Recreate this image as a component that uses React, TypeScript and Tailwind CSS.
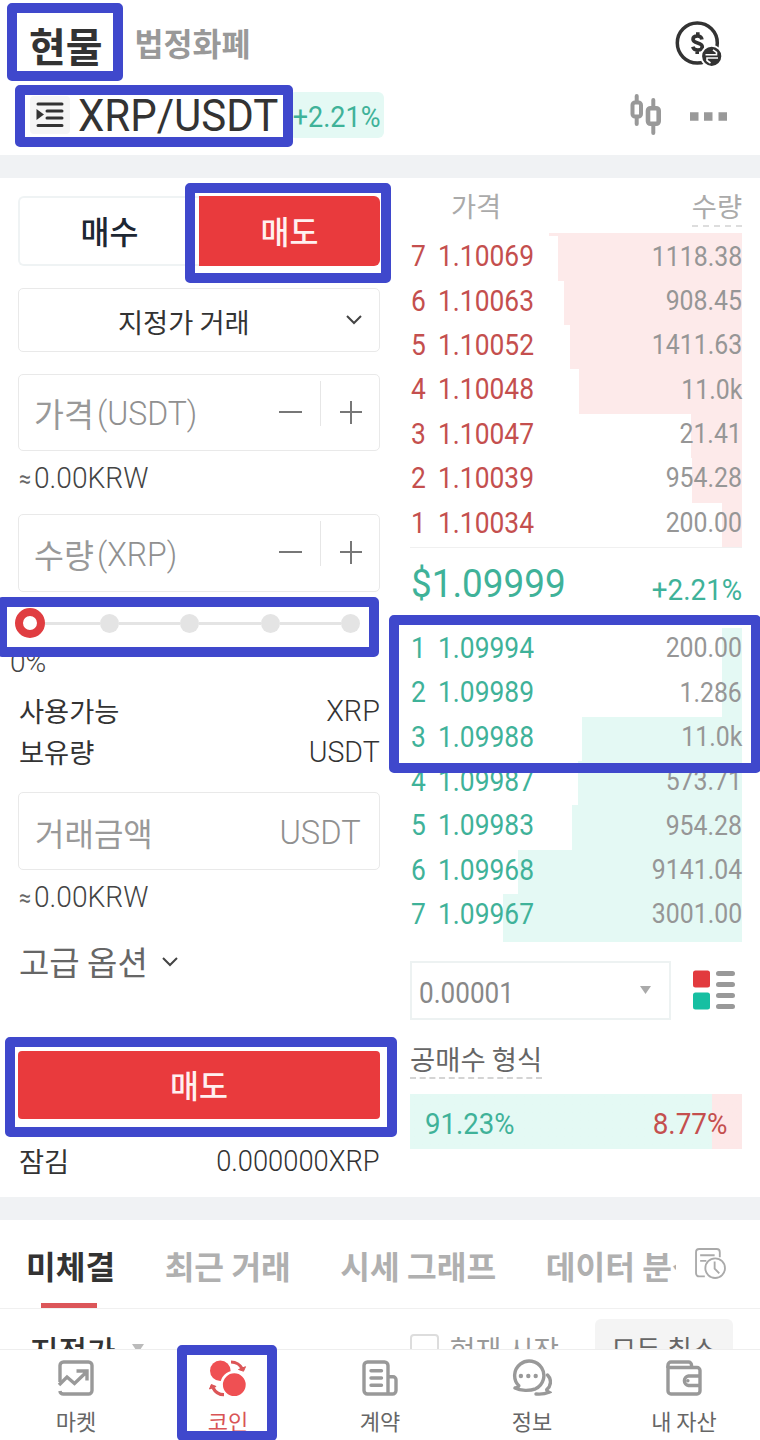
import type { ReactNode } from "react";
import { clsx } from "clsx";

type Level = { n: number; price: string; qty: string; depth: number };

// depth = 深度条宽度（px）
const ASKS: Level[] = [
  { n: 7, price: "1.10069", qty: "1118.38", depth: 184.5 },
  { n: 6, price: "1.10063", qty: "908.45", depth: 178 },
  { n: 5, price: "1.10052", qty: "1411.63", depth: 172 },
  { n: 4, price: "1.10048", qty: "11.0k", depth: 163.5 },
  { n: 3, price: "1.10047", qty: "21.41", depth: 51 },
  { n: 2, price: "1.10039", qty: "954.28", depth: 50 },
  { n: 1, price: "1.10034", qty: "200.00", depth: 20.5 },
];

const BIDS: Level[] = [
  { n: 1, price: "1.09994", qty: "200.00", depth: 20.5 },
  { n: 2, price: "1.09989", qty: "1.286", depth: 20.5 },
  { n: 3, price: "1.09988", qty: "11.0k", depth: 160 },
  { n: 4, price: "1.09987", qty: "573.71", depth: 164 },
  { n: 5, price: "1.09983", qty: "954.28", depth: 170.5 },
  { n: 6, price: "1.09968", qty: "9141.04", depth: 224 },
  { n: 7, price: "1.09967", qty: "3001.00", depth: 239 },
];

/** 拉丁字母 / 数字：横向压窄的 Roboto */
function Num({ className, children }: { className?: string; children: ReactNode }) {
  return (
    <span className={clsx("inline-block whitespace-nowrap font-['Roboto','Noto_Sans_CJK_KR',sans-serif]", className)}>
      {children}
    </span>
  );
}

function BookRow({ level, side }: { level: Level; side: "ask" | "bid" }) {
  const ask = side === "ask";
  return (
    <li className="relative h-[44.38px]">
      <div
        className={clsx("absolute inset-y-0 right-0", ask ? "bg-[#fdeaea]" : "bg-[#e4f9f4]")}
        style={{ width: level.depth }}
      />
      <div className="relative flex h-[39px] items-center">
        <Num className={clsx("w-[28px] origin-left scale-x-[0.88] pl-px text-[30px]", ask ? "text-[#c44f4e]" : "text-[#3fb299]")}>
          {level.n}
        </Num>
        <Num className={clsx("origin-left scale-x-[0.88] text-[30px]", ask ? "text-[#c44f4e]" : "text-[#3fb299]")}>
          {level.price}
        </Num>
        <Num className="ml-auto origin-right scale-x-[0.92] pt-0.5 text-[27px] text-[#969696]">{level.qty}</Num>
      </div>
    </li>
  );
}

function Chevron({ className }: { className?: string }) {
  return (
    <svg viewBox="0 0 16 10" className={clsx("h-[10px] w-4", className)} fill="none" stroke="#444" strokeWidth="2">
      <path d="M1 1l7 7 7-7" />
    </svg>
  );
}

function StepInput({ label, unit, className }: { label: string; unit: string; className?: string }) {
  return (
    <div className={clsx("flex rounded-[5px] border border-[#e9e9e9] pl-[15px]", className)}>
      <div className="flex items-center pt-0.5">
        <span className="text-[32.5px] text-[#999]">{label}</span>
        <Num className="ml-[3px] origin-left scale-x-[0.94] text-[34px] font-light text-[#909090]">({unit})</Num>
      </div>
      <svg viewBox="0 0 88 76" className="ml-auto mr-[14px] h-[76px] w-[88px]" fill="none" stroke="#777" strokeWidth="2">
        <path d="M2 37h23M63 37h22M74 26v23" />
        <path d="M43.500 6v45" stroke="#e6e6e6" strokeWidth="1" />
      </svg>
    </div>
  );
}

function Approx() {
  return (
    <>
      <Num className="ml-px w-[15px] origin-left scale-x-[0.9] text-[24px]">≈</Num>
      <Num className="origin-left scale-x-[0.97] text-[29px] font-light text-[#444]">0.00KRW</Num>
    </>
  );
}

function OrderForm() {
  return (
    <section className="flex w-[362px] flex-col pt-[18px]">
      <div className="flex h-[70px]">
        <div className="flex flex-1 items-center justify-center rounded-l-md border-2 border-r-0 border-[#eff3f4] text-[31.5px] font-medium text-[#1d2733]">
          매수
        </div>
        <div className="flex w-[181px] items-center justify-center rounded-r-md bg-[#e93a3d] text-[31.5px] font-medium text-[#fff0f0]">
          매도
        </div>
      </div>

      <div className="mt-[22px] flex h-[64px] items-center rounded-[5px] border border-[#e9e9e9] pl-[99px] pr-[17px]">
        <span className="pt-[3px] text-[27.3px] text-[#333]">지정가 거래</span>
        <Chevron className="ml-auto" />
      </div>

      <StepInput label="가격" unit="USDT" className="mt-[22px] h-[77px]" />
      <div className="flex h-[63px] items-center pb-2 text-[#666]">
        <Approx />
      </div>
      <StepInput label="수량" unit="XRP" className="h-[78px]" />

      {/* 仓位滑块 */}
      <div className="flex h-[62px] items-center pr-[20px]">
        <div className="-ml-[3px] h-[30px] w-[30px] rounded-full border-8 border-[#e03d41] bg-white" />
        {[25, 50, 75, 100].map((v) => (
          <div key={v} className={clsx("flex items-center", v === 25 ? "w-[74px]" : "w-[80.3px]")}>
            <div className="h-[3px] flex-1 bg-[#e4e4e4]" />
            <div className="h-[19px] w-[19px] rounded-full bg-[#e4e4e4]" />
          </div>
        ))}
      </div>
      <div className="-ml-2 flex h-[14px] items-center pt-[3px]">
        <Num className="origin-left text-[28px] font-light text-[#444]">0%</Num>
      </div>

      <div className="mt-[22px] flex h-[41px] items-center justify-between pl-px text-[27.3px] text-[#333]">
        사용가능
        <Num className="origin-right scale-x-[0.96] text-[30px] font-light">XRP</Num>
      </div>
      <div className="flex h-[41px] items-center justify-between pl-px text-[27.3px] text-[#333]">
        보유량
        <Num className="origin-right scale-x-[0.95] text-[30px] font-light">USDT</Num>
      </div>

      <div className="mt-5 flex h-[78px] items-center justify-between rounded-[5px] border border-[#e9e9e9] pl-4 pr-[18px] pt-0.5 text-[32px] text-[#999]">
        거래금액
        <Num className="origin-right scale-x-[0.96] text-[34px] font-light text-[#909090]">USDT</Num>
      </div>
      <div className="flex h-[54px] items-center pt-px text-[#666]">
        <Approx />
      </div>

      <div className="flex h-[78px] items-center gap-[14px] pb-[3px] pl-px text-[33px] text-[#666]">
        고급 옵션
        <Chevron />
      </div>

      <button className="mt-[49px] h-[68px] rounded bg-[#e93a3d] text-[31.5px] font-medium text-[#fff0f0]">매도</button>

      <div className="flex h-[78px] items-center justify-between pl-px pt-1 text-[27.3px] text-[#333]">
        잠김
        <Num className="origin-right scale-x-[0.91] text-[30px] font-light">0.000000XRP</Num>
      </div>
    </section>
  );
}

function OrderBook() {
  return (
    <section className="flex w-[332px] flex-col">
      <div className="flex h-[55px] justify-between pl-[41px] text-[27.3px] leading-[55px] text-[#aaa]">
        <span>가격</span>
        <span className="h-[49px] border-b-2 border-dashed border-[#ddd]">수량</span>
      </div>
      <div className="ml-auto h-[3.3px] w-[193px] bg-[#fdeaea]" />
      <ul className="border-b border-[#f0f0f0]">
        {ASKS.map((l) => (
          <BookRow key={l.n} level={l} side="ask" />
        ))}
      </ul>

      <div className="flex h-[80px] items-center justify-between text-[#3fb299]">
        <Num className="origin-left scale-x-[0.97] pb-1.5 pl-px text-[38px]">$1.09999</Num>
        <Num className="origin-right scale-x-[0.96] pt-1.5 text-[29px]">+2.21%</Num>
      </div>

      <ul>
        {BIDS.map((l) => (
          <BookRow key={l.n} level={l} side="bid" />
        ))}
      </ul>
      <div className="ml-auto h-[3.3px] w-[239px] bg-[#e4f9f4]" />

      <div className="mt-[19px] flex items-center">
        <div className="flex h-[59px] w-[261px] items-center border-2 border-[#edf2f2] pl-[7px] pr-[18px]">
          <Num className="origin-left scale-x-[0.87] pt-1 text-[30px] text-[#888]">0.00001</Num>
          <svg viewBox="0 0 11 8" className="ml-auto h-2 w-[11px]">
            <path d="M0 0h11L5.500 8z" fill="#aaa" />
          </svg>
        </div>
        <svg viewBox="0 0 42 40" className="ml-[22px] h-10 w-[42px]">
          <rect x="0" y="0.500" width="17" height="17" rx="2.500" fill="#e23a3e" />
          <rect x="0" y="22.500" width="17" height="17" rx="2.500" fill="#16bfa2" />
          <path d="M25.500 3.500h14M25.500 14.500h14M25.500 25.500h14M25.500 36.500h14" stroke="#999" strokeWidth="5" strokeLinecap="round" />
        </svg>
      </div>

      <div className="mt-[19px] h-[40px] self-start border-b-2 border-dashed border-[#d4d4d4] text-[27.4px] leading-[38px] text-[#666]">
        공매수 형식
      </div>
      <div className="mt-[15px] flex h-[55px] items-center justify-between bg-linear-to-r from-[#e4f9f4] from-91% to-[#fde8e8] to-91% px-[15px] pt-1">
        <Num className="origin-left scale-x-[0.92] text-[30px] text-[#3fb299]">91.23%</Num>
        <Num className="origin-right scale-x-[0.93] text-[30px] text-[#c44f4e]">8.77%</Num>
      </div>
    </section>
  );
}

function NavItem({ label, active, children }: { label: string; active?: boolean; children: ReactNode }) {
  return (
    <div className={clsx("flex w-[152px] flex-col items-center pt-[9px] text-[22px]", active ? "text-[#d95455]" : "text-[#666]")}>
      <svg viewBox="0 0 40 40" className="h-10 w-10" fill="none" stroke="#999" strokeWidth="3.400">
        {children}
      </svg>
      <span className="mt-[5px] leading-[32px]">{label}</span>
    </div>
  );
}

const FRAMES = [
  "left-[7px] top-[3px] h-[78px] w-[116px]",
  "left-[15px] top-[85px] h-[62px] w-[278px]",
  "left-[185px] top-[183px] h-[100px] w-[206px]",
  "left-[-3px] top-[597px] h-[60px] w-[382px]",
  "left-[389px] top-[615px] h-[158px] w-[372px]",
  "left-[5px] top-[1037px] h-[100px] w-[392px]",
  "left-[177px] top-[1345px] h-[96px] w-[100px]",
];

export default function App() {
  return (
    <div className="relative flex h-[1440px] w-[760px] flex-col overflow-hidden bg-white font-['Noto_Sans_CJK_KR',sans-serif]">
      {/* 顶部 */}
      <header className="flex h-[86px] shrink-0 items-center pl-[29px] pr-[37px]">
        <h1 className="pt-[3px] text-[40px] font-bold text-[#333]">현물</h1>
        <span className="ml-8 text-[31.5px] font-bold text-[#999]">법정화폐</span>
        <svg viewBox="0 0 48 48" className="ml-auto h-12 w-12" fill="none" stroke="#333" strokeWidth="3.500">
          <circle cx="22.300" cy="24" r="20" />
          <path d="M27 20.500c-.500-2.500-2.500-3.500-4.500-3.500-3 0-4.500 1.500-4.500 3.300 0 4.700 9.300 2.700 9.300 7.400 0 2-1.800 3.300-4.600 3.300-2.400 0-4.300-1-4.900-3.300M22.800 13.300v4M22.200 31v4" strokeWidth="3.600" />
          <circle cx="36.700" cy="37.300" r="10.500" fill="#333" stroke="#fff" strokeWidth="1.800" />
          <path d="M30.500 35.800h11v-2.500l-3.500-2.500M43 39H32v2.500l3.500 2.500" stroke="#fff" strokeWidth="1.600" />
        </svg>
      </header>
      <div className="flex h-[69px] shrink-0 items-center pb-3 pl-[30px] pr-[33px]">
        <div className="flex h-[38px] w-10 items-center justify-center rounded bg-[#f5f5f5]">
          <svg viewBox="0 0 28 26" className="h-[26px] w-7" fill="none" stroke="#333" strokeWidth="3" strokeLinecap="round">
            <path d="M2 2h24M11 9h15M11 16h15M2 23.500h24" />
            <path d="M0.500 7l7.500 5.500-7.500 5.500z" fill="#333" stroke="none" />
          </svg>
        </div>
        <Num className="ml-2 w-[211px] origin-left scale-x-[0.955] pt-[3px] text-[44px] text-[#333]">XRP/USDT</Num>
        <div className="flex h-[46px] w-[95px] items-center justify-end rounded-md bg-[#e4f9f4] pr-1">
          <Num className="origin-right scale-x-[0.9] pt-[3px] text-[30px] text-[#3fb299]">+2.21%</Num>
        </div>
        <svg viewBox="0 0 98 46" className="ml-auto mt-1 h-[46px] w-[98px]" fill="none" stroke="#999">
          <path d="M7.700 2v5M7.700 24v6M24.300 6v6M24.300 32v7" strokeWidth="4" strokeLinecap="round" />
          <rect x="3.500" y="8.500" width="8.500" height="14" rx="2.500" strokeWidth="4" />
          <rect x="19" y="14.200" width="10.700" height="15.600" rx="2.500" strokeWidth="4.600" />
          <path d="M61 22.500h8.500M75 22.500h8.500M89.500 22.500H98" strokeWidth="8.500" />
        </svg>
      </div>

      <div className="h-[23px] shrink-0 bg-[#f0f2f4]" />

      <main className="flex h-[1019px] shrink-0 gap-[30px] px-[18px]">
        <OrderForm />
        <OrderBook />
      </main>

      <div className="h-[23px] shrink-0 bg-[#f0f2f4]" />

      {/* 委托标签 */}
      <div className="flex h-[89px] shrink-0 items-stretch border-b border-[#f0f0f0] pl-[26px] pr-[34px] text-[32.3px] font-bold text-[#b0b0b0]">
        <div className="flex w-[650px] gap-[49.5px] overflow-hidden whitespace-nowrap leading-[90px]">
          <div className="relative text-[#333]">
            미체결
            <div className="absolute bottom-0 left-[15px] h-[5px] w-14 bg-[#dc5659]" />
          </div>
          <div>최근 거래</div>
          <div>시세 그래프</div>
          <div>데이터 분석</div>
        </div>
        <svg viewBox="0 0 30 30" className="ml-auto mt-[28px] h-[31px] w-[31px]" fill="none" stroke="#aaa" strokeWidth="1.800">
          <path d="M9.500 27.500H4a3 3 0 0 1-3-3V4a3 3 0 0 1 3-3h17a3 3 0 0 1 3 3v5M5 7h14M5 12.500h6" />
          <circle cx="19.500" cy="19.500" r="9.500" />
          <path d="M19 13v7l4.500 4.500" />
        </svg>
      </div>

      <div className="flex h-10 shrink-0 items-start overflow-hidden pl-[30px] pr-[27px]">
        <span className="mt-[19px] text-[31px] font-medium leading-[44px] text-[#333]">지정가</span>
        <svg viewBox="0 0 12 9" className="ml-[16px] mt-[35px] h-[9px] w-3">
          <path d="M0 0h12L6 9z" fill="#bbb" />
        </svg>
        <div className="ml-auto mt-[25px] h-[29px] w-[29px] shrink-0 rounded-sm border-2 border-[#ddd]" />
        <span className="ml-[11px] mt-[20px] text-[28px] leading-[40px] text-[#999]">현재 시장</span>
        <div className="ml-[36px] mt-[10px] h-[62px] w-[138px] shrink-0 rounded-md bg-[#f4f4f4] pt-2.5 text-center text-[27px] leading-[40px] text-[#666]">
          모두 취소
        </div>
      </div>

      {/* 底部导航 */}
      <nav className="flex h-[91px] shrink-0 border-t border-[#eee] bg-white">
        <NavItem label="마켓">
          <path d="M4 23V6.500A3.500 3.500 0 0 1 7.500 3h25A3.500 3.500 0 0 1 36 6.500v25a3.500 3.500 0 0 1-3.500 3.500h-25c-2 0-3.300-1-3.600-3" />
          <path d="M3 26l8-8 7.500 6.500L30.500 13M20.500 12H31v9.500" />
        </NavItem>
        <NavItem label="코인" active>
          <circle cx="12.300" cy="11.700" r="10.300" fill="#ef5053" stroke="none" />
          <circle cx="26.300" cy="25.700" r="12.700" fill="#ef5053" stroke="#fff" strokeWidth="2.600" />
          <g stroke="#dc5557" strokeWidth="3.200">
            <path d="M23 3c5 0 9.500 3 11.300 7M16 35.700c-5 0-9-3-11-7" />
            <path d="M30.500 10.500l5 1.700 2-4.500zM1.500 30l1.800-4.500 4.800 2z" fill="#dc5557" strokeWidth="1" strokeLinejoin="round" />
          </g>
        </NavItem>
        <NavItem label="계약">
          <path d="M28 35H7.500A3.500 3.500 0 0 1 4 31.500v-25A3.500 3.500 0 0 1 7.500 3h17A3.500 3.500 0 0 1 28 6.500zM28 17.800h5a3 3 0 0 1 3 3v10.700a3.500 3.500 0 0 1-3.500 3.500H28" />
          <path d="M11 11.700h10.500M11 19h10.500M11 26.300h10.500" strokeLinecap="round" />
        </NavItem>
        <NavItem label="정보">
          <path
            d="M3 29c1.800-.300 3.300-1 3.800-2.200A14.600 14.600 0 1 1 23.500 29.800C18 32 8.500 32 3 29z"
            strokeLinejoin="round"
          />
          <path d="M35.500 16c4.500 4.500 3.500 11-.700 14.500-.500 1 .700 2 2.200 2.800-4.500 2-9 2-13 1.700" strokeLinecap="round" />
          <g fill="#999" stroke="none">
            <circle cx="8.900" cy="17" r="2.200" />
            <circle cx="16.300" cy="17" r="2.200" />
            <circle cx="23.700" cy="17" r="2.200" />
          </g>
        </NavItem>
        <NavItem label="내 자산">
          <path d="M4 9V6a3 3 0 0 1 3-3h17.500a3 3 0 0 1 3 3v3" />
          <path d="M4 8.500h29a3 3 0 0 1 3 3V32a3 3 0 0 1-3 3H7a3 3 0 0 1-3-3z" />
          <path d="M36 17H24.500a4.800 4.800 0 0 0 0 9.500H36" />
          <circle cx="23.800" cy="21.700" r="1.800" fill="#999" stroke="none" />
        </NavItem>
      </nav>

      {/* 教程标注框 */}
      {FRAMES.map((pos) => (
        <div key={pos} className={clsx("pointer-events-none absolute rounded-[5px] border-[10px] border-[#3f48cc]", pos)} />
      ))}
    </div>
  );
}
